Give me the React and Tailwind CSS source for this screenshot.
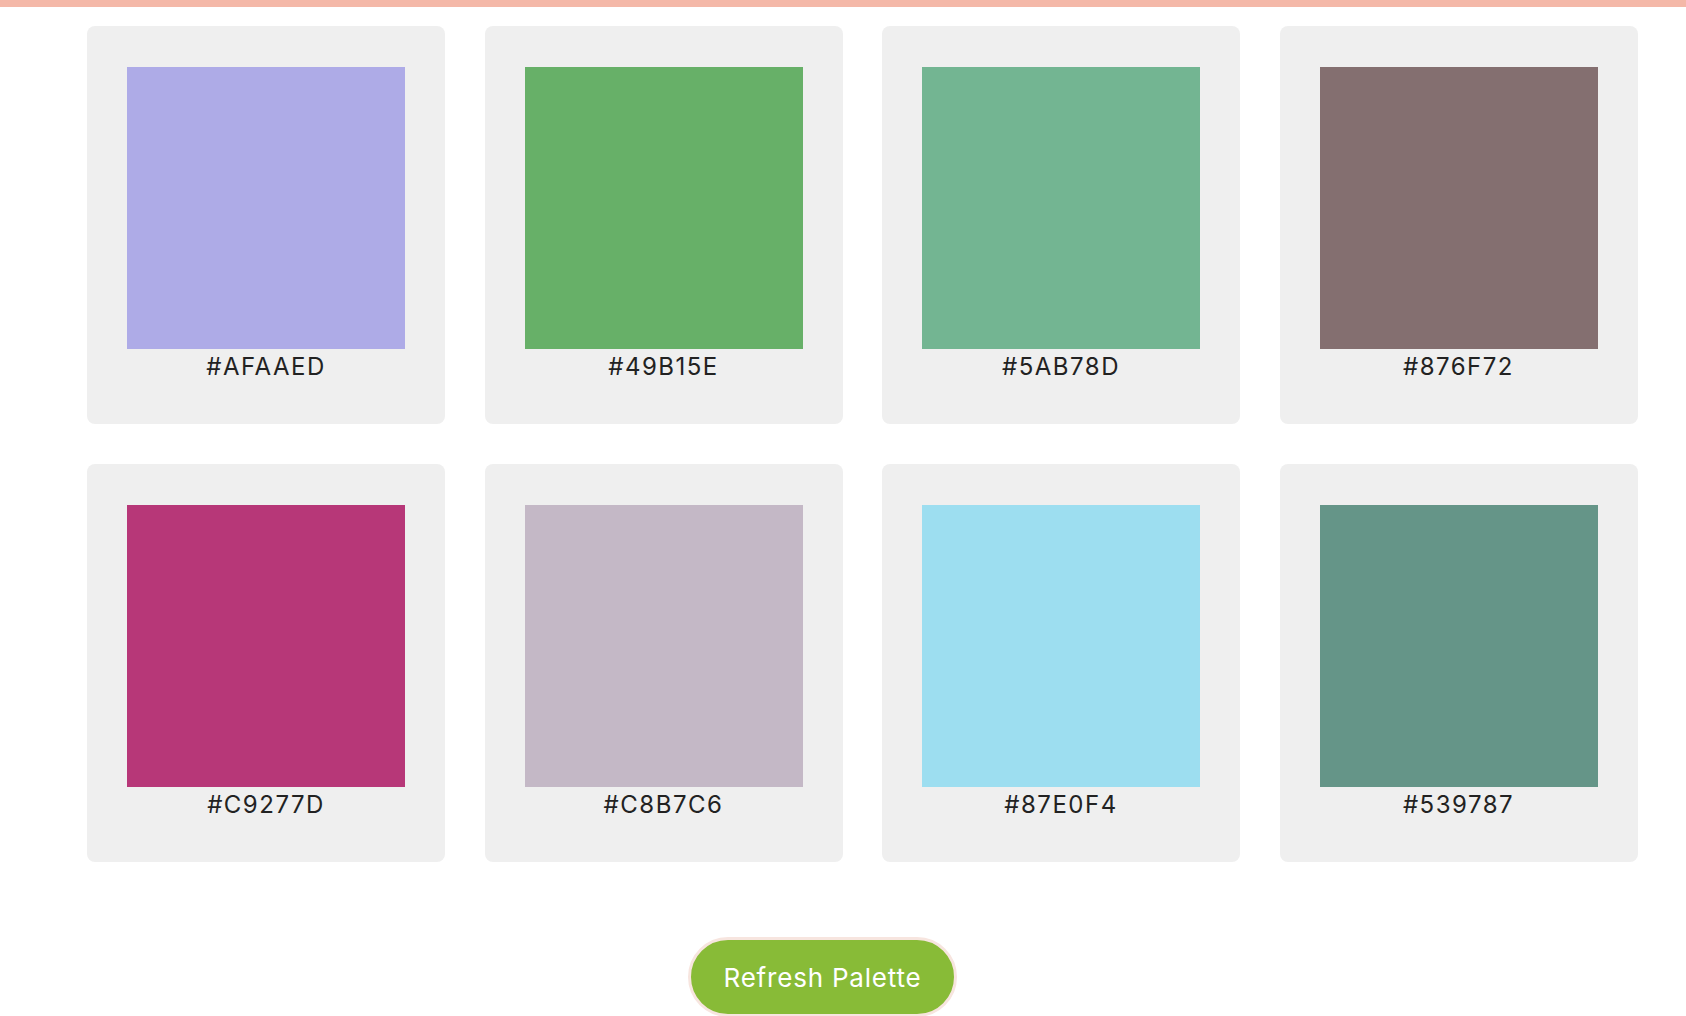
import React from "react";

const colors = [
  "#AFAAED", "#49B15E", "#5AB78D", "#876F72",
  "#C9277D", "#C8B7C6", "#87E0F4", "#539787",
];

const swatchColors = [
  "#AEABE7", "#67B068", "#73B592", "#846F70",
  "#B73778", "#C4B8C6", "#9DDEF0", "#659588",
];

export default function App() {
  return (
    <div className="min-h-[1016px] bg-white" style={{ fontFamily: "Inter, 'Open Sans', sans-serif" }}>
      <div className="h-[7px] bg-[#F4B8A8]" />
      <div className="grid grid-cols-[repeat(4,358px)] gap-x-[39.5px] gap-y-[40px] pl-[87px] pt-[19px]">
        {colors.map((c, i) => (
          <div key={c} className="flex h-[398px] flex-col items-center rounded-[8px] bg-[#EFEFEF] pt-[41px]">
            <div className="h-[282px] w-[278px]" style={{ backgroundColor: swatchColors[i] }} />
            <div className="mt-[3px] text-[24px] leading-[30px] tracking-[1.5px] text-[#222]">{c}</div>
          </div>
        ))}
      </div>
      <div className="pl-[688px] pt-[75px]">
        <button className="flex h-[80px] w-[269px] items-center justify-center rounded-full border-[3px] border-[#F7E5DF] bg-[#88BB37] text-[26px] tracking-[0.8px] text-white">
          Refresh Palette
        </button>
      </div>
    </div>
  );
}
